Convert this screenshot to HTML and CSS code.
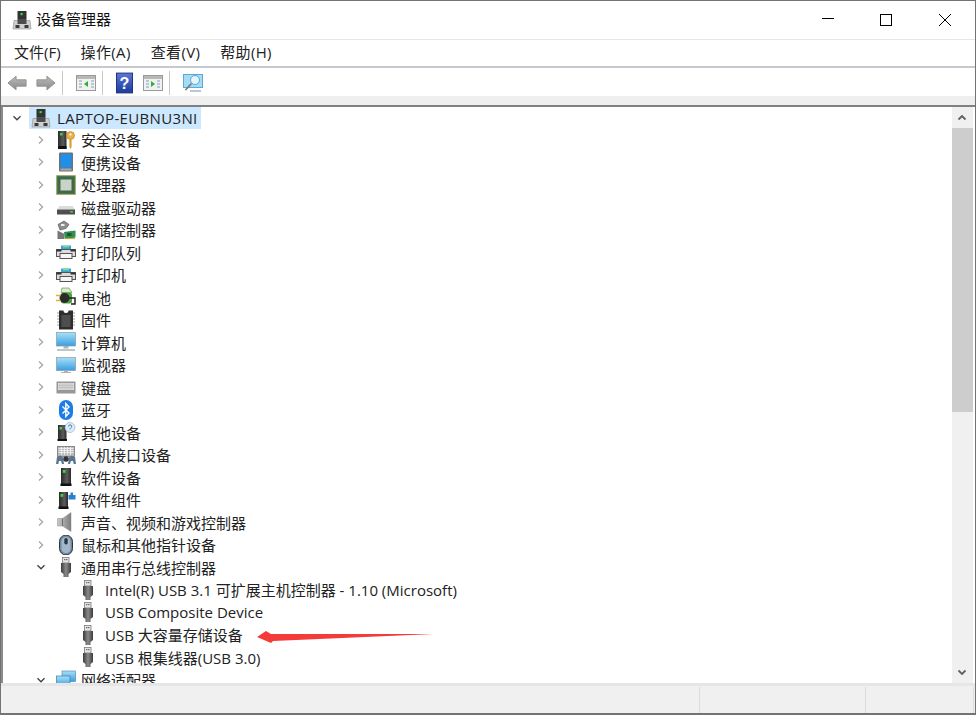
FILE: index.html
```html
<!DOCTYPE html>
<html lang="zh-CN">
<head>
<meta charset="utf-8">
<title>设备管理器</title>
<link rel="stylesheet" href="styles.css">
</head>
<body>
<svg class="defs" width="0" height="0" aria-hidden="true">
  <defs>
    <linearGradient id="gBlue" x1="0" y1="0" x2="0" y2="1"><stop offset="0" stop-color="#a6e0f8"/><stop offset="1" stop-color="#3a9ee0"/></linearGradient>
    <linearGradient id="gDark" x1="0" y1="0" x2="1" y2="0"><stop offset="0" stop-color="#2a2a2a"/><stop offset=".6" stop-color="#5c5c5c"/><stop offset="1" stop-color="#2a2a2a"/></linearGradient>
    <linearGradient id="gUsb" x1="0" y1="0" x2="1" y2="0"><stop offset="0" stop-color="#3c3c3c"/><stop offset=".5" stop-color="#8a8a8a"/><stop offset="1" stop-color="#3c3c3c"/></linearGradient>
    <linearGradient id="gGray" x1="0" y1="0" x2="0" y2="1"><stop offset="0" stop-color="#bcbcbc"/><stop offset="1" stop-color="#8a8a8a"/></linearGradient>
    <linearGradient id="gSound" x1="0" y1="0" x2="1" y2="0"><stop offset="0" stop-color="#c9c9c9"/><stop offset="1" stop-color="#7d7d7d"/></linearGradient>
    <linearGradient id="gHelp" x1="0" y1="0" x2="0" y2="1"><stop offset="0" stop-color="#5a78d8"/><stop offset="1" stop-color="#1c3a9a"/></linearGradient>
    <symbol id="chevR" viewBox="0 0 10 10"><path d="M3 1.500 6.600 5 3 8.500" fill="none" stroke="#a6a6a6" stroke-width="1.300"/></symbol>
    <symbol id="chevD" viewBox="0 0 10 10"><path d="M1.500 3.200 5 6.800 8.500 3.200" fill="none" stroke="#404040" stroke-width="1.300"/></symbol>
    <symbol id="computer" viewBox="0 0 20 20"><rect x="5.500" y="1" width="9" height="8" fill="#333"/><rect x="8.500" y="3" width="2.200" height="2.200" fill="#3fd23f"/><path d="M2 10.500h16l1 8.500H1z" fill="#cfcfcf" stroke="#8a8a8a" stroke-width=".6"/><rect x="5.500" y="9" width="9" height="5" fill="#4c4c4c"/><rect x="3.500" y="15" width="4" height="3" fill="#3a3a3a"/><rect x="12.500" y="15" width="4" height="3" fill="#3a3a3a"/></symbol>
    <symbol id="security" viewBox="0 0 20 20"><rect x="2" y="1" width="8.500" height="18" fill="url(#gDark)"/><rect x="4" y="3" width="2.500" height="2.500" fill="#3fd23f"/><rect x="2" y="16" width="8.500" height="3" fill="#111"/><circle cx="14.500" cy="5.500" r="4" fill="#e7b24a" stroke="#b58320" stroke-width=".6"/><path d="M13.400 8.500h2.200v8.500l-1.100 2-1.100-2z" fill="#d9a030"/><circle cx="14.500" cy="4.500" r="1.100" fill="#fff"/></symbol>
    <symbol id="portable" viewBox="0 0 20 20"><rect x="3" y="0.500" width="14" height="19" rx="1" fill="#6d7278"/><rect x="4.500" y="2" width="11" height="13.500" fill="#1f8fe8"/><rect x="4.500" y="16.500" width="11" height="2" fill="#aaa"/></symbol>
    <symbol id="cpu" viewBox="0 0 20 20"><rect x="0.500" y="0.500" width="19" height="19" fill="#4a7a52" stroke="#b69a35" stroke-dasharray="1 1"/><rect x="2" y="2" width="16" height="16" fill="#3d6b48"/><rect x="4.500" y="4.500" width="11" height="11" fill="#ccd2c8"/></symbol>
    <symbol id="disk" viewBox="0 0 20 20"><path d="M3.500 9h13l2.500 3.500H1z" fill="#dcdcdc"/><rect x="1" y="12.500" width="18" height="5" fill="#4f4f4f"/><rect x="14" y="14" width="3" height="1.500" fill="#49c949"/></symbol>
    <symbol id="storage" viewBox="0 0 20 20"><path d="M2 4.500 8 1l5 3.500-3 4-6 1.500z" fill="#8d8d8d" stroke="#4d4d4d" stroke-width=".6"/><rect x="5" y="4" width="3.500" height="2" fill="#eee"/><path d="M1.500 10.500l7 3.500v5h-7z" fill="#777"/><path d="M8 12l11.500-1.500v7L9 19z" fill="#2e8f4f"/><rect x="11" y="13" width="4.500" height="3" fill="#1d5a33"/><path d="M9 18.600h10" stroke="#c9a53d"/></symbol>
    <symbol id="printer" viewBox="0 0 20 20"><rect x="5" y="3.500" width="10" height="4" fill="#3ba3e0"/><rect x="7" y="3.500" width="6" height="1.800" fill="#7fe07f"/><rect x="0.500" y="7.500" width="19" height="7" fill="#dcdcdc" stroke="#555"/><rect x="0.500" y="7.500" width="5" height="2" fill="#333"/><rect x="14.500" y="7.500" width="5" height="2" fill="#333"/><rect x="4" y="11.500" width="12" height="5" fill="#f6f6f6" stroke="#555"/></symbol>
    <symbol id="battery" viewBox="0 0 20 20"><path d="M6 1h7l3 4.500H5z" fill="#d8eccb" stroke="#4d8a3a" stroke-width=".6"/><rect x="5" y="5.500" width="11" height="11" rx="2.500" fill="#4fa03e"/><circle cx="8.500" cy="11" r="5" fill="#2b2b2b"/><path d="M0 8.500h4.500M0 13.500h4.500" stroke="#e0b040" stroke-width="1.500"/><path d="M13 11h6v6h-4" fill="none" stroke="#222" stroke-width="1.500"/></symbol>
    <symbol id="firmware" viewBox="0 0 20 20"><path d="M3 0.500h4.500a2.500 2.500 0 0 0 5 0H17v19H3z" fill="#2e2e2e"/><path d="M1 3h2M1 6h2M1 9h2M1 12h2M1 15h2M17 3h2M17 6h2M17 9h2M17 12h2M17 15h2" stroke="#a0a0a0" stroke-width="1.200"/><rect x="5.500" y="5" width="9" height="12" fill="#4e4e4e"/></symbol>
    <symbol id="pc" viewBox="0 0 20 20"><rect x="0.500" y="0.500" width="19" height="13.500" fill="url(#gBlue)" stroke="#8b9aa6" stroke-width=".7"/><rect x="7.500" y="14" width="5" height="2.500" fill="#a8b4bd"/><rect x="1" y="17" width="18" height="2" fill="#bcc6cd"/></symbol>
    <symbol id="monitor" viewBox="0 0 20 20"><rect x="0.500" y="2.500" width="19" height="13" fill="url(#gBlue)" stroke="#8b9aa6" stroke-width=".7"/><rect x="8" y="15.500" width="4" height="1.500" fill="#a8b4bd"/><rect x="5" y="17" width="10" height="1" fill="#aab4bc"/></symbol>
    <symbol id="keyboard" viewBox="0 0 20 20"><rect x="0.500" y="4.500" width="19" height="12" fill="#989898"/><rect x="2" y="6" width="16" height="7" fill="#e4e4e4"/><path d="M2 8.300h16M2 10.600h16M4 6v7M6 6v7M8 6v7M10 6v7M12 6v7M14 6v7M16 6v7" stroke="#a4a4a4" stroke-width=".5"/></symbol>
    <symbol id="bluetooth" viewBox="0 0 20 20"><rect x="3" y="0" width="14" height="20" rx="7" fill="#1e7ce6"/><path d="M6.500 6.500 13 13l-3.200 3.500v-13L13 7 6.500 13.500" fill="none" stroke="#fff" stroke-width="1.400"/></symbol>
    <symbol id="other" viewBox="0 0 20 20"><rect x="2" y="3" width="8.500" height="16" fill="url(#gDark)"/><rect x="1.500" y="17" width="9.500" height="2" fill="#111"/><rect x="3.500" y="5" width="2.500" height="2.500" fill="#3fd23f"/><circle cx="14" cy="5.500" r="5" fill="#dcecf9" stroke="#8aa9c4" stroke-width=".6"/><path d="M12.500 4.500a1.600 1.600 0 1 1 2.200 1.500l-.7.700v.6" fill="none" stroke="#4a78a8"/></symbol>
    <symbol id="hid" viewBox="0 0 20 20"><rect x="1.500" y="1.500" width="17" height="10" fill="#bbb" stroke="#666" stroke-width=".7"/><path d="M2.500 3.500h15M2.500 5.500h15M2.500 7.500h15M5.500 2v8M8.500 2v8M11.500 2v8M14.500 2v8" stroke="#f4f4f4" stroke-width=".8"/><path d="M0 19l1-7 3.500-1.500 2.500 2 1 6.500H6l-1-3H3l-.7 3z" fill="#5a7590"/><path d="M20 19l-1-7-3.500-1.500-2.500 2-1 6.500h2l1-3h2l.7 3z" fill="#5a7590"/><circle cx="10" cy="14" r="2.800" fill="#333"/></symbol>
    <symbol id="softdev" viewBox="0 0 20 20"><rect x="5" y="1" width="10" height="18" fill="url(#gDark)"/><rect x="4.500" y="16.500" width="11" height="2.500" fill="#111"/><rect x="6.800" y="3" width="2.800" height="2.800" fill="#3fd23f"/></symbol>
    <symbol id="softcomp" viewBox="0 0 20 20"><rect x="3" y="2" width="9" height="17" fill="url(#gDark)"/><rect x="2.500" y="16.500" width="10" height="2.500" fill="#111"/><rect x="4.500" y="4" width="2.800" height="2.800" fill="#3fd23f"/><path d="M12.500 5h2V2.500h2.500V5h2.500v4.500h-7z" fill="#2b7fd0"/></symbol>
    <symbol id="sound" viewBox="0 0 20 20"><path d="M1.500 6.500h5L15 0.500v19l-8.500-5.500h-5z" fill="url(#gSound)" stroke="#8c8c8c" stroke-width=".5"/><path d="M6.500 6.500v7.500" stroke="#6f6f6f"/></symbol>
    <symbol id="mouse" viewBox="0 0 20 20"><rect x="3.500" y="0" width="13" height="20" rx="6.500" fill="#6f88a6" stroke="#333"/><rect x="5.500" y="2" width="9" height="16" rx="4.500" fill="#a3b7cb"/><rect x="8.300" y="3" width="3.400" height="6.500" rx="1.700" fill="#2c3440"/></symbol>
    <symbol id="usb" viewBox="0 0 20 20"><rect x="6.500" y="0.500" width="6.500" height="5.500" fill="#e4e4e4" stroke="#7a7a7a" stroke-width=".8"/><rect x="8.200" y="2" width="1.200" height="1.200" fill="#555"/><rect x="10.200" y="2" width="1.200" height="1.200" fill="#555"/><path d="M5 6h10v9l-2.500 2v3h-5v-3L5 15z" fill="url(#gUsb)"/></symbol>
    <symbol id="network" viewBox="0 0 20 20"><rect x="6" y="1" width="13.500" height="10.500" fill="url(#gBlue)" stroke="#5a8db5" stroke-width=".7"/><rect x="0.500" y="6" width="13.500" height="10.500" fill="url(#gBlue)" stroke="#3f7ca8" stroke-width=".7"/></symbol>
  </defs>
</svg>

<div class="window">
  <header class="titlebar">
    <svg class="app-icon"><use href="#computer"/></svg>
    <span class="app-title">设备管理器</span>
    <div class="winctl">
      <svg class="ctl" viewBox="0 0 46 20"><path d="M17 8.500h12" stroke="#000" fill="none"/></svg>
      <svg class="ctl" viewBox="0 0 46 20"><rect x="16.500" y="4.500" width="11" height="11" stroke="#000" fill="none"/></svg>
      <svg class="ctl" viewBox="0 0 46 20"><path d="M17 4l12 12M29 4 17 16" stroke="#000" fill="none"/></svg>
    </div>
  </header>
  <nav class="menubar">
    <span class="menu">文件(F)</span>
    <span class="menu">操作(A)</span>
    <span class="menu">查看(V)</span>
    <span class="menu">帮助(H)</span>
  </nav>
  <div class="toolbar">
    <svg class="tool tool-back" viewBox="0 0 22 20"><path d="M1 10 10 2.500V6.500H21V13.500H10V17.500Z" fill="url(#gGray)" stroke="#8f8f8f"/></svg>
    <svg class="tool" viewBox="0 0 22 20"><path d="M21 10 12 2.500V6.500H1V13.500H12V17.500Z" fill="url(#gGray)" stroke="#8f8f8f"/></svg>
    <span class="sep"></span>
    <svg class="tool" viewBox="0 0 20 20"><rect x="0.500" y="2.500" width="19" height="15" fill="#f1f1f1" stroke="#9a9a9a"/><rect x="1" y="3" width="18" height="3" fill="#b9b9b9"/><path d="M3 8h3M3 11h3M3 14h3M15 8h3M15 11h3M15 14h3" stroke="#7c9ec4"/><path d="M8 11 12 8v6z" fill="#2fae2f"/></svg>
    <span class="sep"></span>
    <svg class="tool tool-help" viewBox="0 0 18 22"><rect x="0.500" y="0.500" width="17" height="21" fill="url(#gHelp)" stroke="#1a2f7c"/><text x="9" y="17" class="help-q">?</text></svg>
    <svg class="tool" viewBox="0 0 20 20"><rect x="0.500" y="2.500" width="19" height="15" fill="#f1f1f1" stroke="#9a9a9a"/><rect x="1" y="3" width="18" height="3" fill="#b9b9b9"/><path d="M3 8h3M3 11h3M3 14h3M14 8h3M14 11h3M14 14h3" stroke="#7c9ec4"/><path d="M12 11 8 8v6z" fill="#2fae2f"/></svg>
    <span class="sep"></span>
    <svg class="tool" viewBox="0 0 20 20"><rect x="0.500" y="1.500" width="19" height="13" fill="#a5dcf5" stroke="#5ca9d6"/><circle cx="12" cy="7" r="4.500" fill="#e4f5fc" stroke="#5ca9d6"/><path d="M8.500 10.500 2.500 17" stroke="#7a7a7a" stroke-width="1.800"/><path d="M7 18h11" stroke="#9db8c8" stroke-width="1.500"/></svg>
  </div>
  <div class="strip"></div>
  <main class="content">
    <div class="tree">
      <div class="row root"><svg class="chev"><use href="#chevD"/></svg><div class="root-sel"><svg class="ico"><use href="#computer"/></svg><span class="label root-label">LAPTOP-EUBNU3NI</span></div></div>
      <div class="row l1"><svg class="chev"><use href="#chevR"/></svg><svg class="ico"><use href="#security"/></svg><span class="label">安全设备</span></div>
      <div class="row l1"><svg class="chev"><use href="#chevR"/></svg><svg class="ico"><use href="#portable"/></svg><span class="label">便携设备</span></div>
      <div class="row l1"><svg class="chev"><use href="#chevR"/></svg><svg class="ico"><use href="#cpu"/></svg><span class="label">处理器</span></div>
      <div class="row l1"><svg class="chev"><use href="#chevR"/></svg><svg class="ico"><use href="#disk"/></svg><span class="label">磁盘驱动器</span></div>
      <div class="row l1"><svg class="chev"><use href="#chevR"/></svg><svg class="ico"><use href="#storage"/></svg><span class="label">存储控制器</span></div>
      <div class="row l1"><svg class="chev"><use href="#chevR"/></svg><svg class="ico"><use href="#printer"/></svg><span class="label">打印队列</span></div>
      <div class="row l1"><svg class="chev"><use href="#chevR"/></svg><svg class="ico"><use href="#printer"/></svg><span class="label">打印机</span></div>
      <div class="row l1"><svg class="chev"><use href="#chevR"/></svg><svg class="ico"><use href="#battery"/></svg><span class="label">电池</span></div>
      <div class="row l1"><svg class="chev"><use href="#chevR"/></svg><svg class="ico"><use href="#firmware"/></svg><span class="label">固件</span></div>
      <div class="row l1"><svg class="chev"><use href="#chevR"/></svg><svg class="ico"><use href="#pc"/></svg><span class="label">计算机</span></div>
      <div class="row l1"><svg class="chev"><use href="#chevR"/></svg><svg class="ico"><use href="#monitor"/></svg><span class="label">监视器</span></div>
      <div class="row l1"><svg class="chev"><use href="#chevR"/></svg><svg class="ico"><use href="#keyboard"/></svg><span class="label">键盘</span></div>
      <div class="row l1"><svg class="chev"><use href="#chevR"/></svg><svg class="ico"><use href="#bluetooth"/></svg><span class="label">蓝牙</span></div>
      <div class="row l1"><svg class="chev"><use href="#chevR"/></svg><svg class="ico"><use href="#other"/></svg><span class="label">其他设备</span></div>
      <div class="row l1"><svg class="chev"><use href="#chevR"/></svg><svg class="ico"><use href="#hid"/></svg><span class="label">人机接口设备</span></div>
      <div class="row l1"><svg class="chev"><use href="#chevR"/></svg><svg class="ico"><use href="#softdev"/></svg><span class="label">软件设备</span></div>
      <div class="row l1"><svg class="chev"><use href="#chevR"/></svg><svg class="ico"><use href="#softcomp"/></svg><span class="label">软件组件</span></div>
      <div class="row l1"><svg class="chev"><use href="#chevR"/></svg><svg class="ico"><use href="#sound"/></svg><span class="label">声音、视频和游戏控制器</span></div>
      <div class="row l1"><svg class="chev"><use href="#chevR"/></svg><svg class="ico"><use href="#mouse"/></svg><span class="label">鼠标和其他指针设备</span></div>
      <div class="row l1"><svg class="chev"><use href="#chevD"/></svg><svg class="ico"><use href="#usb"/></svg><span class="label">通用串行总线控制器</span></div>
      <div class="row l2"><svg class="ico"><use href="#usb"/></svg><span class="label">Intel(R) USB 3.1 可扩展主机控制器 - 1.10 (Microsoft)</span></div>
      <div class="row l2"><svg class="ico"><use href="#usb"/></svg><span class="label">USB Composite Device</span></div>
      <div class="row l2"><svg class="ico"><use href="#usb"/></svg><span class="label">USB 大容量存储设备</span></div>
      <div class="row l2"><svg class="ico"><use href="#usb"/></svg><span class="label">USB 根集线器(USB 3.0)</span></div>
      <div class="row l1"><svg class="chev"><use href="#chevD"/></svg><svg class="ico"><use href="#network"/></svg><span class="label">网络适配器</span></div>
      <svg class="annotation" viewBox="0 0 180 14"><path d="M2 7 11 1 16 4 179 4 18 11 16 13Z" fill="#f53a3a"/></svg>
    </div>
    <div class="scrollbar">
      <svg class="sb-arrow" viewBox="0 0 20 21"><path d="M6.500 12.500 10 9l3.500 3.500" fill="none" stroke="#606060" stroke-width="1.800"/></svg>
      <div class="sb-track"><div class="sb-thumb"></div></div>
      <svg class="sb-arrow" viewBox="0 0 20 21"><path d="M6.500 8.500 10 12l3.500-3.500" fill="none" stroke="#606060" stroke-width="1.800"/></svg>
    </div>
  </main>
  <footer class="statusbar">
    <div class="pane pane-a"></div>
    <div class="pane pane-b"></div>
    <div class="pane pane-c"></div>
  </footer>
</div>
</body>
</html>
```
FILE: styles.css
```css
* { box-sizing: border-box; }
html, body { margin: 0; padding: 0; background: #fff; }
body {
  width: 976px;
  height: 715px;
  overflow: hidden;
  font-family: "Open Sans", "Noto Sans CJK SC", sans-serif;
  color: #1a1a1a;
}
.defs { position: absolute; }
.window {
  width: 976px;
  height: 715px;
  display: flex;
  flex-direction: column;
  border: 1px solid #737373;
  border-bottom-width: 2px;
  background: #fff;
}
.titlebar {
  height: 39px;
  display: flex;
  align-items: center;
  padding-left: 11px;
  border-bottom: 1px solid #e6e6e6;
  flex: none;
}
.app-icon { width: 20px; height: 20px; flex: none; }
.app-title { margin-left: 4px; padding-bottom: 3px; font-size: 15px; color: #111; }
.winctl { margin-left: auto; display: flex; padding-right: 7px; gap: 12.5px; }
.ctl { width: 46px; height: 20px; display: block; }
.menubar {
  height: 28px;
  display: flex;
  align-items: center;
  padding: 0 0 3px 13px;
  gap: 20px;
  font-size: 15px;
  border-bottom: 2px solid #c5c8cc;
  flex: none;
}
.menu { color: #222; }
.menu + .menu { letter-spacing: .35px; }
.toolbar {
  height: 28px;
  display: flex;
  align-items: center;
  padding: 1px 0 0 6px;
  flex: none;
}
.tool { width: 20px; height: 20px; flex: none; }
.tool-back { margin-right: 9px; }
.tool-help { width: 17px; height: 22px; margin-right: 10px; }
.help-q { font: bold 17px "Liberation Sans", sans-serif; fill: #fff; text-anchor: middle; }
.sep { width: 1px; height: 24px; background: #c9c9c9; margin: 0 13px 0 6px; flex: none; }
.strip { height: 11px; background: #efefef; flex: none; border-bottom: 2px solid #808080; }
.content {
  flex: 1;
  min-height: 0;
  display: flex;
  border-left: 2px solid #8a8a8a;
}
.tree {
  flex: 1;
  min-width: 0;
  overflow: hidden;
  position: relative;
}
.row {
  height: 22.5px;
  display: flex;
  align-items: center;
  font-size: 15px;
  white-space: nowrap;
}
.chev { width: 10px; height: 10px; flex: none; }
.ico { width: 20px; height: 20px; flex: none; }
.label { color: #222; }
.root { height: 21.25px; padding-left: 9px; }
.root .chev { margin-right: 7px; }
.root-sel { display: flex; align-items: center; height: 22px; width: 172px; background: #cce8ff; padding-left: 2px; }
.root-label { margin-left: 6px; letter-spacing: .35px; }
.l1 { padding-left: 33px; }
.l1 .chev { margin-right: 10px; }
.l1 .label { margin-left: 5px; }
.l2 { padding-left: 75px; }
.l2 .label { margin-left: 7px; }
.annotation { position: absolute; left: 252px; top: 523px; width: 180px; height: 14px; }
.scrollbar {
  width: 21px;
  margin-right: 2px;
  flex: none;
  display: flex;
  flex-direction: column;
  background: #f0f0f0;
}
.sb-arrow { width: 20px; height: 21px; flex: none; }
.sb-track { flex: 1; }
.sb-thumb { height: 284px; background: #cdcdcd; }
.statusbar {
  height: 30px;
  flex: none;
  display: flex;
  background: #f0f0f0;
  border-top: 3px solid #e6e6e6;
}
.pane { border-right: 1px solid #dcdcdc; margin-top: 1px; }
.pane-a { width: 699px; }
.pane-b { width: 166px; }
.pane-c { width: 108px; }
```
